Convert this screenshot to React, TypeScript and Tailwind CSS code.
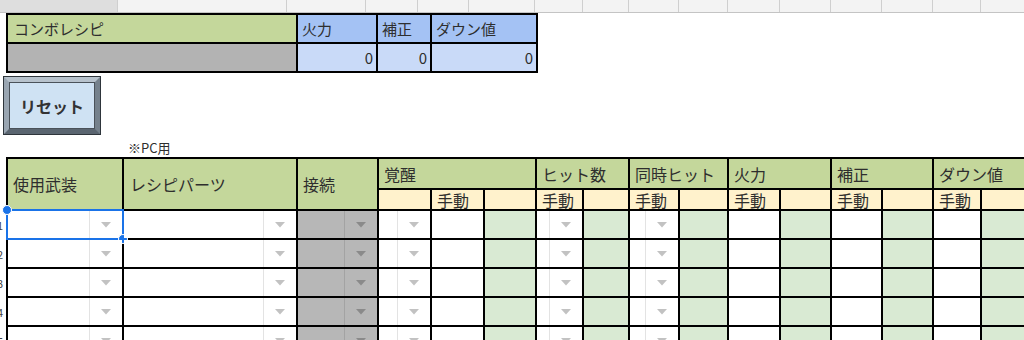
import React from "react";

const jp = { fontFamily: '"Noto Sans CJK JP", "Noto Sans", sans-serif' };

// spreadsheet column header strip (cropped at top)
const stripCols = [118, 169, 79, 52, 51, 66, 48, 46, 50, 49, 52, 51, 51, 51, 48, 60];

type Cell = "dd" | "ddGray" | "white" | "green";
const dataRow: Cell[] = [
  "dd", "dd", "ddGray", "dd", "white", "green", "dd", "green",
  "dd", "green", "white", "green", "white", "green", "white", "green",
];

const groups = [
  { label: "覚醒", span: "col-span-3" },
  { label: "ヒット数", span: "col-span-2" },
  { label: "同時ヒット", span: "col-span-2" },
  { label: "火力", span: "col-span-2" },
  { label: "補正", span: "col-span-2" },
  { label: "ダウン値", span: "col-span-2" },
];

const subHeader = ["", "手動", "", "手動", "", "手動", "", "手動", "", "手動", "", "手動", ""];

function Arrow({ dark }: { dark?: boolean }) {
  return (
    <svg width="10" height="6" viewBox="0 0 10 6">
      <path d="M0 0h10L5 5.5z" fill={dark ? "#8a8a8a" : "#c2c2c2"} />
    </svg>
  );
}

function DataCell({ kind, selected }: { kind: Cell; selected?: boolean }) {
  if (kind === "green") return <div className="bg-[#d9ead3]" />;
  if (kind === "white") return <div className="bg-white" />;
  const gray = kind === "ddGray";
  return (
    <div className={`relative flex justify-end ${gray ? "bg-[#b7b7b7]" : "bg-white"}`}>
      <div
        className={`w-[33px] flex items-center justify-center border-l ${
          gray ? "border-[#a3a3a3]" : "border-[#e3e3e3]"
        }`}
      >
        <Arrow dark={gray} />
      </div>
      {selected && (
        <div className="absolute -inset-[2px] border-2 border-[#1a73e8]">
          <div className="absolute -left-[6px] -top-[6px] w-[10px] h-[10px] rounded-full bg-[#1a73e8] border border-white" />
          <div className="absolute -right-[6px] -bottom-[6px] w-[10px] h-[10px] rounded-full bg-[#1a73e8] border border-white" />
        </div>
      )}
    </div>
  );
}

export default function App() {
  return (
    <div className="w-[1024px] h-[340px] overflow-hidden bg-white text-[#2e2e2e]" style={jp}>
      {/* sheet column headers */}
      <div className="flex h-[13px] border-b border-[#c4c4c4]">
        {stripCols.map((w, i) => (
          <div
            key={i}
            className={`shrink-0 border-r border-[#cfcfcf] ${i === 0 ? "bg-[#dedede]" : "bg-[#f3f3f3]"}`}
            style={{ width: w }}
          />
        ))}
      </div>

      {/* combo summary */}
      <div className="ml-[6px] grid w-max grid-cols-[288px_78px_52px_104px] grid-rows-[27px_27px] gap-[2px] bg-black p-[2px] text-[15px] leading-none">
        <div className="bg-[#c4d79b] flex items-center pl-[6px]">コンボレシピ</div>
        <div className="bg-[#a4c2f4] flex items-center pl-[4px]">火力</div>
        <div className="bg-[#a4c2f4] flex items-center pl-[4px]">補正</div>
        <div className="bg-[#a4c2f4] flex items-center pl-[4px]">ダウン値</div>
        <div className="bg-[#b3b3b3]" />
        <div className="bg-[#c9daf8] flex items-center justify-end pr-[3px]">0</div>
        <div className="bg-[#c9daf8] flex items-center justify-end pr-[3px]">0</div>
        <div className="bg-[#c9daf8] flex items-center justify-end pr-[3px]">0</div>
      </div>

      {/* reset button */}
      <div className="ml-[3px] mt-[3px] w-[98px] h-[59px] border border-[#2e353b]">
        <div className="h-full border-[5px] border-t-[#b7c2cc] border-l-[#9aa6b2] border-r-[#75818c] border-b-[#5a6570]">
          <div className="h-full border border-[#4a525a] bg-[#cfe2f3] flex items-center justify-center text-[16px] font-bold text-[#333]">
            リセット
          </div>
        </div>
      </div>

      <div className="ml-[128px] mt-[6px] h-[16px] text-[13px] leading-none">※PC用</div>

      {/* recipe table */}
      <div className="flex">
        <div className="w-[6px] shrink-0 overflow-hidden pt-[54px] text-[11px] text-[#444]">
          {["1", "2", "3", "4", "5"].map((n) => (
            <div key={n} className="h-[29px] w-[10px] -ml-[7px] flex items-center justify-end">
              {n}
            </div>
          ))}
        </div>
        <div className="grid w-max shrink-0 grid-cols-[114px_172px_79px_51px_51px_50px_45px_44px_48px_47px_50px_49px_49px_49px_46px_48px] grid-rows-[29px_19px_27px_27px_27px_27px_27px] gap-[2px] bg-black p-[2px] text-[16px] leading-none">
          <div className="row-span-2 bg-[#c4d79b] flex items-center pl-[5px]">使用武装</div>
          <div className="row-span-2 bg-[#c4d79b] flex items-center pl-[6px]">レシピパーツ</div>
          <div className="row-span-2 bg-[#c4d79b] flex items-center pl-[5px]">接続</div>
          {groups.map((g) => (
            <div key={g.label} className={`${g.span} bg-[#c4d79b] flex items-center pl-[5px] whitespace-nowrap`}>
              {g.label}
            </div>
          ))}
          {subHeader.map((t, i) => (
            <div key={i} className="bg-[#fff2cc] flex items-center pl-[5px]">
              {t}
            </div>
          ))}
          {[0, 1, 2, 3, 4].map((r) =>
            dataRow.map((k, c) => (
              <DataCell key={`${r}-${c}`} kind={k} selected={r === 0 && c === 0} />
            ))
          )}
        </div>
      </div>
    </div>
  );
}
